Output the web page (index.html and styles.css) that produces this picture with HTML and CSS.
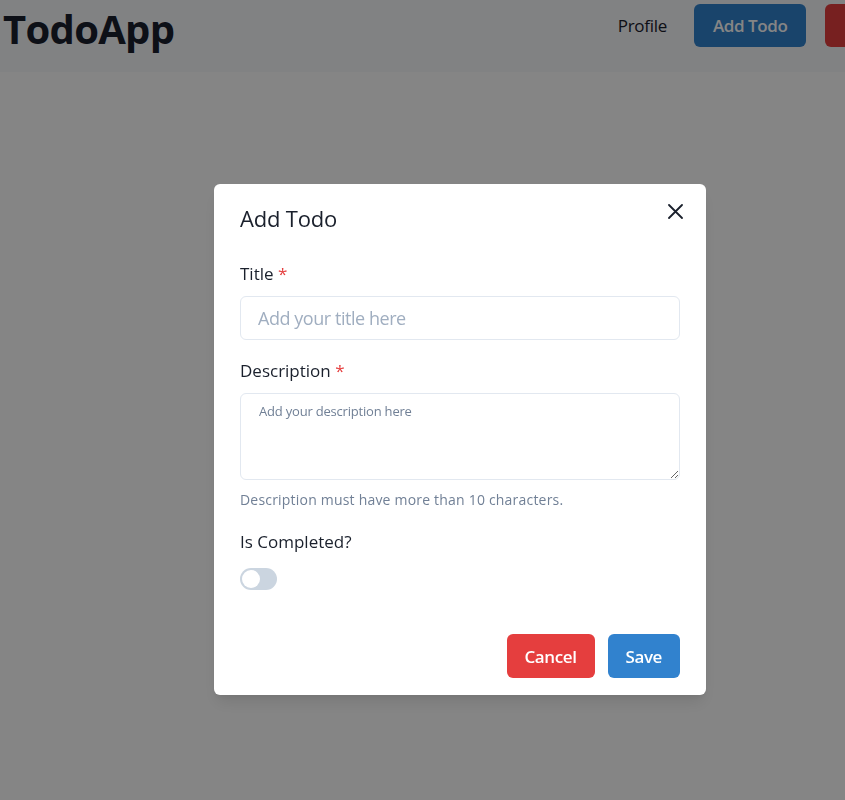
FILE: index.html
```html
<!DOCTYPE html>
<html lang="en">
<head>
<meta charset="utf-8">
<title>TodoApp</title>
<link rel="stylesheet" href="styles.css">
</head>
<body>
<div class="page">
  <header class="topbar">
    <h1 class="brand">TodoApp</h1>
    <nav class="nav">
      <a class="nav-link" href="#">Profile</a>
      <button class="btn btn-blue" type="button">Add Todo</button>
      <button class="btn btn-red" type="button">Logout</button>
    </nav>
  </header>
  <main class="content"></main>
</div>

<div class="overlay"></div>

<div class="modal-wrap">
  <section class="modal" role="dialog" aria-labelledby="modal-title">
    <header class="modal-header">
      <h2 id="modal-title" class="modal-title">Add Todo</h2>
      <button class="close-btn" type="button" aria-label="Close">
        <svg width="15" height="15" viewBox="0 0 15 15" aria-hidden="true">
          <path d="M1 1 L14 14 M14 1 L1 14" stroke="#1A202C" stroke-width="1.8" stroke-linecap="round" fill="none"/>
        </svg>
      </button>
    </header>
    <form class="modal-body">
      <div class="field field-first">
        <label class="label" for="title">Title <span class="req">*</span></label>
        <input class="input" id="title" type="text" placeholder="Add your title here">
      </div>
      <div class="field">
        <label class="label" for="desc">Description <span class="req">*</span></label>
        <textarea class="textarea" id="desc" placeholder="Add your description here"></textarea>
        <p class="helper">Description must have more than 10 characters.</p>
      </div>
      <div class="field field-switch">
        <label class="label" for="done">Is Completed?</label>
        <span class="switch"><span class="knob"></span></span>
      </div>
    </form>
    <footer class="modal-footer">
      <button class="btn btn-red" type="button">Cancel</button>
      <button class="btn btn-blue" type="button">Save</button>
    </footer>
  </section>
</div>
</body>
</html>
```

FILE: styles.css
```css
* { box-sizing: border-box; }

html, body {
  margin: 0;
  padding: 0;
  overflow: hidden;
  height: 100%;
}

body {
  font-family: "Open Sans", "Noto Sans", "Liberation Sans", sans-serif;
  color: #1A202C;
  background: #ffffff;
}

.page {
  width: 920px;
  min-height: 800px;
  background: #ffffff;
}

.topbar {
  height: 72px;
  display: flex;
  align-items: flex-start;
  justify-content: space-between;
  padding: 0 2px 0 3px;
  background: #F7F9FC;
}

.brand {
  margin: 5px 0 0 0;
  font-size: 40px;
  line-height: 48px;
  font-weight: 700;
  letter-spacing: -0.7px;
  color: #1A202C;
}

.nav {
  display: flex;
  align-items: center;
  gap: 19px;
  padding-top: 4px;
}

.nav-link {
  font-size: 17px;
  line-height: 27px;
  color: #1A202C;
  text-decoration: none;
  margin-right: 8px;
  letter-spacing: -0.3px;
}

.btn {
  height: 44px;
  padding: 0 18px;
  border: 0;
  border-radius: 6px;
  font-family: inherit;
  font-size: 17px;
  font-weight: 600;
  letter-spacing: -0.4px;
  color: #ffffff;
  cursor: pointer;
}

.topbar .btn {
  height: 43px;
  padding: 0 19px;
}

.btn-blue { background: #3182CE; }
.btn-red { background: #E53E3E; }

.overlay {
  position: fixed;
  inset: 0;
  background: rgba(0, 0, 0, 0.48);
}

.modal-wrap {
  position: fixed;
  top: 0;
  left: 0;
  width: 920px;
  height: 100%;
  display: flex;
  justify-content: center;
  align-items: flex-start;
  padding-top: 184px;
}

.modal {
  position: relative;
  width: 492px;
  background: #ffffff;
  border-radius: 6px;
  box-shadow: 0 10px 15px -3px rgba(0,0,0,0.1), 0 4px 6px -2px rgba(0,0,0,0.05);
}

.modal-header {
  padding: 19px 26px 0 26px;
}

.modal-title {
  margin: 0;
  font-size: 22px;
  line-height: 30px;
  font-weight: 500;
  letter-spacing: -0.2px;
  color: #1A202C;
}

.close-btn {
  position: absolute;
  top: 11px;
  right: 15px;
  width: 32px;
  height: 32px;
  padding: 0;
  border: 0;
  border-radius: 6px;
  background: transparent;
  display: flex;
  align-items: center;
  justify-content: center;
}

.modal-body {
  padding: 0 26px;
  display: flex;
  flex-direction: column;
}

.field {
  display: flex;
  flex-direction: column;
  margin-top: 19px;
}

.field-first { margin-top: 29px; }

.label {
  font-size: 17px;
  line-height: 24px;
  font-weight: 500;
  letter-spacing: 0;
  color: #1A202C;
  margin-bottom: 10px;
}

.req {
  color: #E53E3E;
  margin-left: 0;
}

.input,
.textarea {
  width: 100%;
  border: 1px solid #E2E8F0;
  border-radius: 6px;
  background: #ffffff;
  font-family: inherit;
  color: #1A202C;
  outline: none;
}

.input {
  height: 44px;
  padding: 0 17px;
  font-size: 18px;
  letter-spacing: -0.45px;
}

.input::placeholder { color: #A0AEC0; }

.textarea {
  height: 87px;
  padding: 7px 18px;
  font-size: 13px;
  line-height: 20px;
  letter-spacing: -0.2px;
  resize: vertical;
  display: block;
}

.textarea::placeholder { color: #718096; }

.helper {
  margin: 10px 0 0 0;
  font-size: 14px;
  line-height: 20px;
  letter-spacing: 0.2px;
  color: #718096;
}

.field-switch { margin-top: 20px; }
.field-switch .label { margin-bottom: 14px; }

.switch {
  width: 37px;
  height: 22px;
  border-radius: 11px;
  background: #CBD5E0;
  padding: 2px;
  display: flex;
  align-items: center;
}

.knob {
  width: 18px;
  height: 18px;
  border-radius: 50%;
  background: #ffffff;
}

.modal-footer {
  display: flex;
  justify-content: flex-end;
  gap: 13px;
  padding: 44px 26px 17px 26px;
}
```
